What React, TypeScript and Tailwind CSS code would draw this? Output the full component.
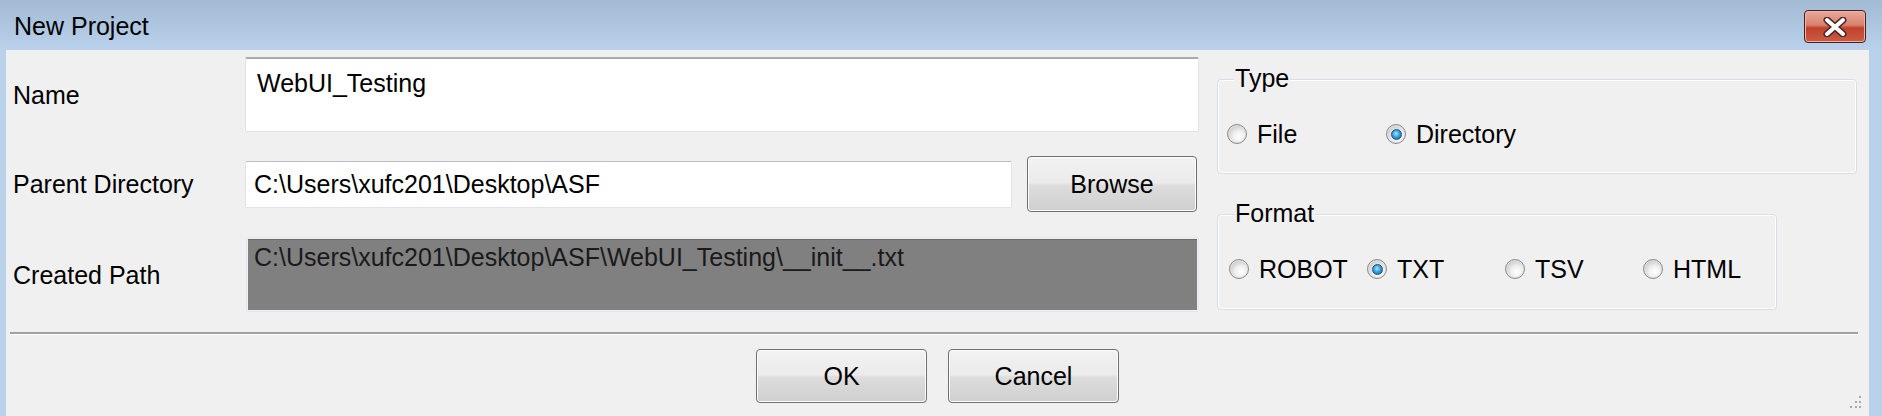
import React from "react";

function Radio({ label, checked, width }: { label: string; checked?: boolean; width: string }) {
  return (
    <div className={`flex items-center gap-[10px] ${width}`}>
      <div className="w-[20px] h-[20px] rounded-full border border-[#8a8a8a] bg-[radial-gradient(circle_at_60%_65%,#ffffff_0%,#f0f0f0_35%,#c6c6c6_78%,#a8a8a8_100%)] shadow-[inset_0_0_0_1px_#e6e6e6] flex items-center justify-center shrink-0">
        {checked ? (
          <div className="w-[11px] h-[11px] rounded-full border border-[#1c4f7c] bg-[radial-gradient(circle_at_45%_40%,#a6e6ff_0%,#3aa0dc_45%,#125d9c_100%)]" />
        ) : null}
      </div>
      <span>{label}</span>
    </div>
  );
}

function WinButton({ label, className }: { label: string; className: string }) {
  return (
    <div
      className={`flex items-center justify-center rounded-[4px] border border-[#707070] shadow-[inset_0_0_0_1px_#fcfcfc] bg-[linear-gradient(to_bottom,#f2f2f2_0%,#ebebeb_48%,#dddddd_52%,#cfcfcf_100%)] ${className}`}
    >
      {label}
    </div>
  );
}

function GroupBox({ title, className, children }: { title: string; className: string; children: React.ReactNode }) {
  return (
    <div
      className={`relative rounded-[4px] border border-[#d5dfe5] shadow-[inset_0_0_0_1px_#ffffff] flex items-start pt-[40px] ${className}`}
    >
      <span className="absolute left-[16px] top-[-16px] bg-[#f0f0f0] px-[1px] leading-[28px]">{title}</span>
      {children}
    </div>
  );
}

export default function App() {
  return (
    <div className="w-[1882px] h-[416px] overflow-hidden flex flex-col bg-[#b9d1ea] text-black text-[25px] leading-[28px] font-['Liberation_Sans',Arial,sans-serif]">
      {/* Title bar */}
      <div className="h-[50px] shrink-0 flex items-start justify-between bg-[linear-gradient(to_bottom,#a3bad4,#b9d1ea)]">
        <div className="pl-[14px] pt-[12px]">New Project</div>
        <div className="mt-[10px] mr-[16px] w-[62px] h-[33px] rounded-[4px] border border-[#4a1f1f] shadow-[inset_0_0_0_1px_#eab3a6] bg-[linear-gradient(to_bottom,#e9a99b_0%,#d8826f_45%,#c0412b_55%,#cf5b42_100%)] flex items-center justify-center">
          <svg width="26" height="20" viewBox="0 0 26 20">
            <path d="M5 3 L21 17 M21 3 L5 17" stroke="#4b2b2b" strokeWidth="7" strokeLinecap="round" />
            <path d="M5 3 L21 17 M21 3 L5 17" stroke="#ffffff" strokeWidth="4" strokeLinecap="round" />
          </svg>
        </div>
      </div>

      {/* Body */}
      <div className="flex-1 flex">
        <div className="w-[6px] shrink-0" />
        <div className="flex-1 bg-[#f0f0f0] flex flex-col">
          {/* Top section */}
          <div className="h-[282px] shrink-0 flex">
            {/* Left form */}
            <div className="w-[1193px] shrink-0 pl-[7px] pt-[7px] flex flex-col">
              <div className="h-[75px] flex items-center">
                <div className="w-[232px] shrink-0">Name</div>
                <div className="w-[954px] h-[75px] bg-white rounded-[2px] border border-[#dfe3e8] border-t-2 border-t-[#a9a9a9] pl-[11px] pt-[10px]">
                  WebUI_Testing
                </div>
              </div>
              <div className="mt-[24px] h-[56px] flex items-center">
                <div className="w-[232px] shrink-0">Parent Directory</div>
                <div className="w-[767px] h-[47px] bg-white rounded-[2px] border border-[#e1e5ea] border-t-[#b8bcc2] pl-[8px] flex items-center">
                  C:\Users\xufc201\Desktop\ASF
                </div>
                <WinButton label="Browse" className="ml-[15px] w-[170px] h-[56px]" />
              </div>
              <div className="mt-[25px] h-[75px] flex items-center">
                <div className="w-[233px] shrink-0">Created Path</div>
                <div className="w-[953px] h-[75px] rounded-[2px] border border-[#e3e7ec] p-[1px]">
                  <div className="w-full h-full bg-[#808080] border-t border-t-[#6a6a6a] pl-[6px] pt-[3px] text-[#1a1a1a]">
                    C:\Users\xufc201\Desktop\ASF\WebUI_Testing\__init__.txt
                  </div>
                </div>
              </div>
            </div>

            {/* Right groups */}
            <div className="ml-[18px] flex flex-col">
              <GroupBox title="Type" className="mt-[29px] w-[640px] h-[95px] pl-[9px]">
                <Radio label="File" width="w-[159px]" />
                <Radio label="Directory" checked width="w-[200px]" />
              </GroupBox>
              <GroupBox title="Format" className="mt-[40px] w-[560px] h-[96px] pl-[11px]">
                <Radio label="ROBOT" width="w-[138px]" />
                <Radio label="TXT" checked width="w-[138px]" />
                <Radio label="TSV" width="w-[138px]" />
                <Radio label="HTML" width="w-[120px]" />
              </GroupBox>
            </div>
          </div>

          {/* Separator */}
          <div className="ml-[4px] mr-[11px] h-[3px] bg-[#a0a0a0] border-b border-b-white" />

          {/* Buttons */}
          <div className="relative flex-1 flex justify-center gap-[21px] pt-[14px]">
            <WinButton label="OK" className="w-[171px] h-[54px]" />
            <WinButton label="Cancel" className="w-[171px] h-[54px]" />
            <svg className="absolute right-[6px] bottom-[6px]" width="16" height="16" viewBox="0 0 16 16">
              <g fill="#a8a8a8">
                <rect x="12" y="2" width="2" height="2" />
                <rect x="8" y="7" width="2" height="2" />
                <rect x="12" y="7" width="2" height="2" />
                <rect x="3" y="12" width="2" height="2" />
                <rect x="8" y="12" width="2" height="2" />
                <rect x="12" y="12" width="2" height="2" />
              </g>
            </svg>
          </div>
        </div>
        <div className="w-[13px] shrink-0" />
      </div>
    </div>
  );
}
